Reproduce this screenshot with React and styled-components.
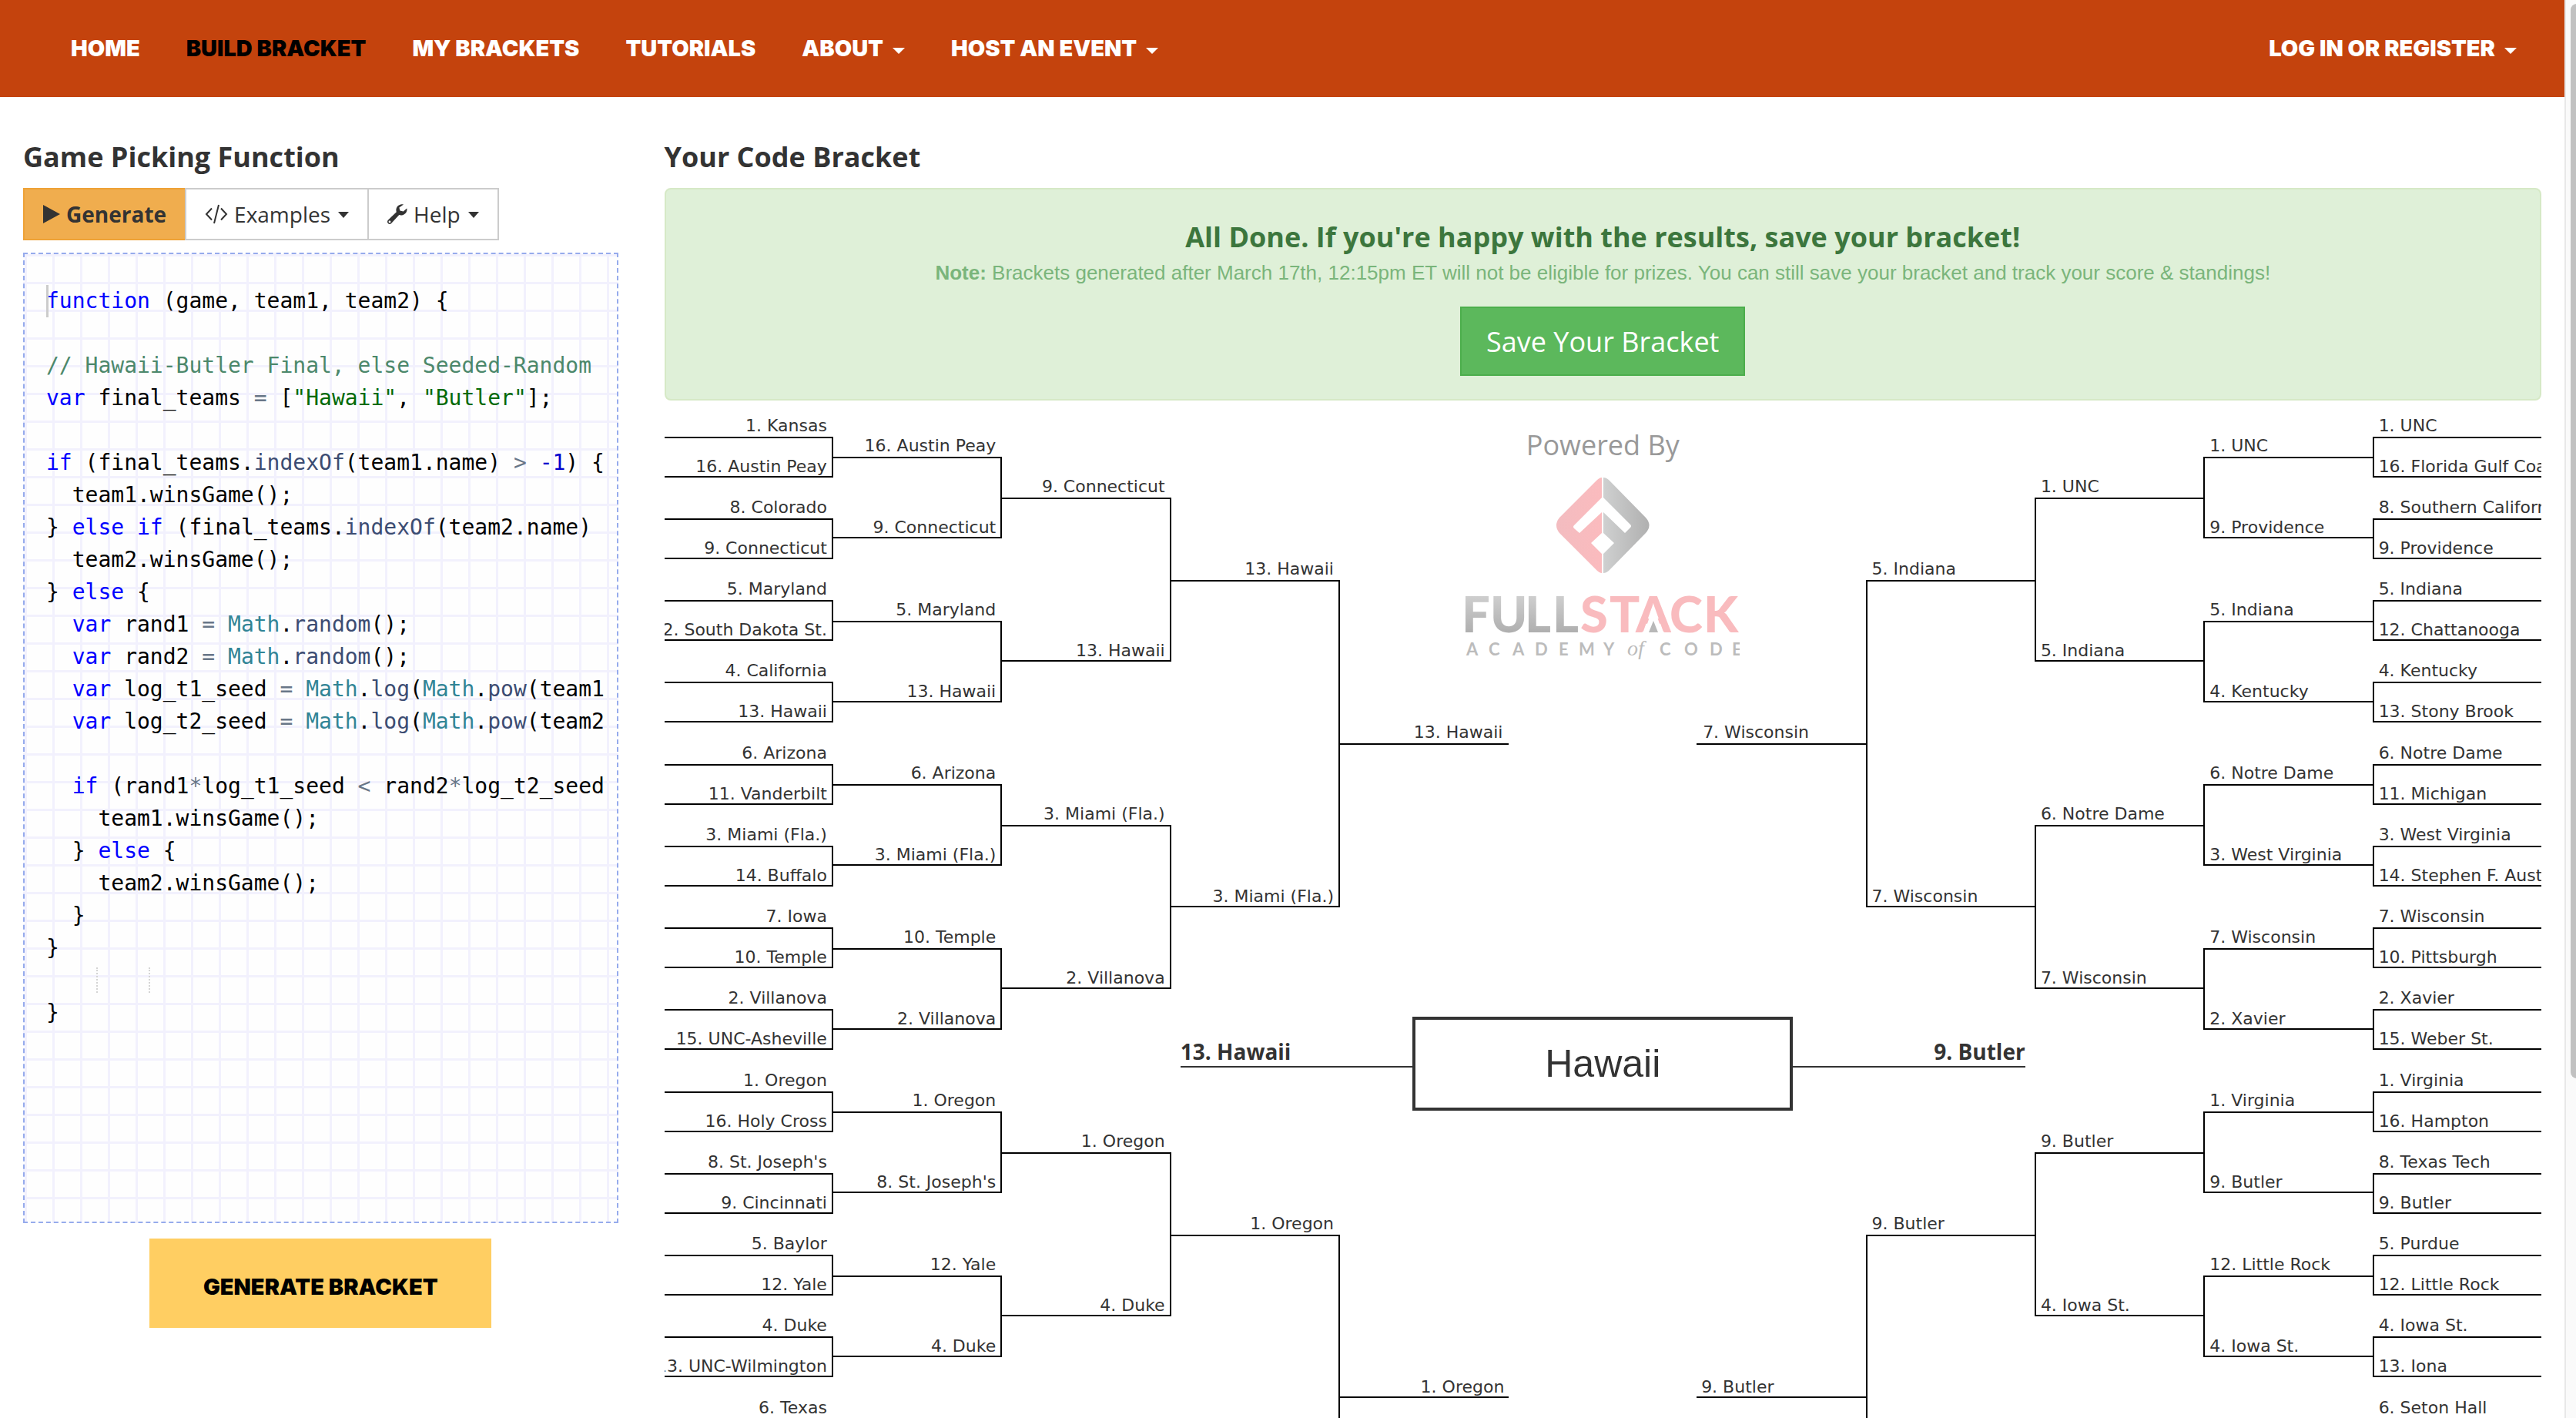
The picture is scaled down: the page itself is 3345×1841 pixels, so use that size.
import React from "react";
import styled, { createGlobalStyle } from "styled-components";

const leftRounds = [
  [
    ["1. Kansas", "16. Austin Peay"],
    ["8. Colorado", "9. Connecticut"],
    ["5. Maryland", "12. South Dakota St."],
    ["4. California", "13. Hawaii"],
    ["6. Arizona", "11. Vanderbilt"],
    ["3. Miami (Fla.)", "14. Buffalo"],
    ["7. Iowa", "10. Temple"],
    ["2. Villanova", "15. UNC-Asheville"],
    ["1. Oregon", "16. Holy Cross"],
    ["8. St. Joseph's", "9. Cincinnati"],
    ["5. Baylor", "12. Yale"],
    ["4. Duke", "13. UNC-Wilmington"],
    ["6. Texas", ""],
  ],
  [
    ["16. Austin Peay", "9. Connecticut"],
    ["5. Maryland", "13. Hawaii"],
    ["6. Arizona", "3. Miami (Fla.)"],
    ["10. Temple", "2. Villanova"],
    ["1. Oregon", "8. St. Joseph's"],
    ["12. Yale", "4. Duke"],
  ],
  [
    ["9. Connecticut", "13. Hawaii"],
    ["3. Miami (Fla.)", "2. Villanova"],
    ["1. Oregon", "4. Duke"],
  ],
  [
    ["13. Hawaii", "3. Miami (Fla.)"],
    ["1. Oregon", ""],
  ],
  [["13. Hawaii", "1. Oregon"]],
];

const rightRounds = [
  [
    ["1. UNC", "16. Florida Gulf Coast"],
    ["8. Southern California", "9. Providence"],
    ["5. Indiana", "12. Chattanooga"],
    ["4. Kentucky", "13. Stony Brook"],
    ["6. Notre Dame", "11. Michigan"],
    ["3. West Virginia", "14. Stephen F. Austin"],
    ["7. Wisconsin", "10. Pittsburgh"],
    ["2. Xavier", "15. Weber St."],
    ["1. Virginia", "16. Hampton"],
    ["8. Texas Tech", "9. Butler"],
    ["5. Purdue", "12. Little Rock"],
    ["4. Iowa St.", "13. Iona"],
    ["6. Seton Hall", ""],
  ],
  [
    ["1. UNC", "9. Providence"],
    ["5. Indiana", "4. Kentucky"],
    ["6. Notre Dame", "3. West Virginia"],
    ["7. Wisconsin", "2. Xavier"],
    ["1. Virginia", "9. Butler"],
    ["12. Little Rock", "4. Iowa St."],
  ],
  [
    ["1. UNC", "5. Indiana"],
    ["6. Notre Dame", "7. Wisconsin"],
    ["9. Butler", "4. Iowa St."],
  ],
  [
    ["5. Indiana", "7. Wisconsin"],
    ["9. Butler", ""],
  ],
  [["7. Wisconsin", "9. Butler"]],
];

const navLinks = [
  { text: "Home" },
  { text: "Build Bracket", active: true },
  { text: "My Brackets" },
  { text: "Tutorials" },
  { text: "About", menu: true },
  { text: "Host an Event", menu: true },
];

function Side({ rounds, right }) {
  return (
    <SideWrap $right={right}>
      {rounds.map((games, i) => (
        <Round key={i} $slots={16 / 2 ** i}>
          {games.map(([top, bottom], key) => (
            <Game key={key}>
              <Team $right={right}>{top}</Team>
              <Joint $right={right} $last={i === 4}>
                <Team $right={right} $inner>
                  {bottom}
                </Team>
              </Joint>
            </Game>
          ))}
        </Round>
      ))}
    </SideWrap>
  );
}

function PlayIcon() {
  return (
    <svg width="22" height="24" viewBox="0 0 22 24" aria-hidden="true">
      <path d="M0 0 22 12 0 24Z" fill="currentColor" />
    </svg>
  );
}

function CodeIcon() {
  return (
    <svg width="30" height="26" viewBox="0 0 30 26" aria-hidden="true">
      <path
        d="M9 5.500 2 13l7 7.500M21 5.500 28 13l-7 7.500M18 1l-6 24"
        fill="none"
        stroke="currentColor"
        strokeWidth="2"
      />
    </svg>
  );
}

function WrenchIcon() {
  return (
    <svg width="26" height="26" viewBox="0 0 26 26" aria-hidden="true">
      <path
        d="M21 0.600C17 -0.400 12.600 2 11.600 6c-.4 1.500-.2 3 .2 4.200L.9 20.800c-1.200 1.200-1.200 3 0 4.200s3 1.200 4.200 0l10.200-11c1.400.6 3 .6 4.600.2 4-1 6.300-5 5.400-8.800l-4.600 4.200-4.300-1-1-4.200ZM3 21.600a1.400 1.400 0 1 1 0 2.800 1.400 1.400 0 0 1 0-2.800Z"
        fill="currentColor"
        fillRule="evenodd"
      />
    </svg>
  );
}

function FullstackLogo() {
  return (
    <Logo viewBox="0 0 356 236" role="img" aria-label="Fullstack Academy of Code">
      <defs>
        <linearGradient id="pink" x1="0" x2="1">
          <stop offset="0" stopColor="#f3bcc0" />
          <stop offset="1" stopColor="#fbbbbe" />
        </linearGradient>
        <linearGradient id="silver" x1="0" x2="1">
          <stop offset="0" stopColor="#cfd0d0" />
          <stop offset="1" stopColor="#b0b0b0" />
        </linearGradient>
        <linearGradient id="steel" x1="0" y1="0" x2="0" y2="1">
          <stop offset="0.200" stopColor="#cfcfcf" />
          <stop offset="0.800" stopColor="#b0b0b0" />
        </linearGradient>
      </defs>
      <path
        d="M177 0v26l-36 36q-2 2 0 4l7 6 29-27v27l-14 13 14 14v25q-3 0-7-4l-48-48q-8-10 0-20l48-48q4-4 7-4Z"
        fill="url(#pink)"
      />
      <path
        d="M179 0v26l35 35q2 2 0 4l-7 7-28-27v27l14 13-14 14v25q4 0 8-4l47-48q9-10 0-20l-47-48q-4-4-8-4Z"
        fill="url(#silver)"
      />
      <LogoWord x="-5 32 77 113" y="201" fill="url(#steel)">
        FULL
      </LogoWord>
      <LogoWord x="149 187 221 265 309" y="201" fill="#f9bbbe">
        STACK
      </LogoWord>
      {/* opens the crossbar of the A */}
      <path d="M244 166l12 36h-24Z" fill="#fff" />
      <path d="M244 186l6 15h-12Z" fill="#b8b8b8" />
      <LogoSmall x="1 30 61 90 121 147 179" y="231">
        ACADEMY
      </LogoSmall>
      <LogoOf x="210" y="231">
        of
      </LogoOf>
      <LogoSmall x="252 284 317 346" y="231">
        CODE
      </LogoSmall>
    </Logo>
  );
}

function App() {
  return (
    <Window>
      <GlobalStyle />
      <Page>
        <Header>
          <Nav>
            {navLinks.map((link) => (
              <NavLink key={link.text} href="#" $active={link.active}>
                {link.text}
                {link.menu && <Caret />}
              </NavLink>
            ))}
          </Nav>
          <NavLink href="#">
            Log in or Register
            <Caret />
          </NavLink>
        </Header>

        <Columns>
          <Column>
            <Title>Game Picking Function</Title>
            <Toolbar>
              <ToolButton $primary>
                <PlayIcon />
                Generate
              </ToolButton>
              <ToolButton>
                <CodeIcon />
                Examples
                <SmallCaret />
              </ToolButton>
              <ToolButton>
                <WrenchIcon />
                Help
                <SmallCaret />
              </ToolButton>
            </Toolbar>
            <Editor>
              <Cursor />
              <Code>
                <Kw>function</Kw> (game, team1, team2) {"{\n"}
                {"\n"}
                <Note>{"// Hawaii-Butler Final, else Seeded-Random"}</Note>
                {"\n"}
                <Kw>var</Kw> final_teams <Op>=</Op> [<Str>"Hawaii"</Str>,{" "}
                <Str>"Butler"</Str>];{"\n"}
                {"\n"}
                <Kw>if</Kw> (final_teams.<Fn>indexOf</Fn>(team1.name){" "}
                <Op>&gt;</Op> <Num>-1</Num>) {"{\n"}
                {"  team1.winsGame();\n"}
                {"} "}
                <Kw>else</Kw> <Kw>if</Kw> (final_teams.<Fn>indexOf</Fn>
                {"(team2.name)\n"}
                {"  team2.winsGame();\n"}
                {"} "}
                <Kw>else</Kw> {"{\n"}
                {"  "}
                <Kw>var</Kw> rand1 <Op>=</Op> <Lib>Math</Lib>.<Fn>random</Fn>
                {"();\n"}
                {"  "}
                <Kw>var</Kw> rand2 <Op>=</Op> <Lib>Math</Lib>.<Fn>random</Fn>
                {"();\n"}
                {"  "}
                <Kw>var</Kw> log_t1_seed <Op>=</Op> <Lib>Math</Lib>.
                <Fn>log</Fn>(<Lib>Math</Lib>.<Fn>pow</Fn>
                {"(team1\n"}
                {"  "}
                <Kw>var</Kw> log_t2_seed <Op>=</Op> <Lib>Math</Lib>.
                <Fn>log</Fn>(<Lib>Math</Lib>.<Fn>pow</Fn>
                {"(team2\n"}
                {"\n"}
                {"  "}
                <Kw>if</Kw> (rand1<Op>*</Op>log_t1_seed <Op>&lt;</Op> rand2
                <Op>*</Op>
                {"log_t2_seed\n"}
                {"    team1.winsGame();\n"}
                {"  } "}
                <Kw>else</Kw> {"{\n"}
                {"    team2.winsGame();\n"}
                {"  }\n"}
                {"}\n"}
                <Guide>{"    "}</Guide>
                <Guide>{"    "}</Guide>
                {"\n}"}
              </Code>
            </Editor>
            <GenerateButton>Generate Bracket</GenerateButton>
          </Column>

          <Column>
            <Title>Your Code Bracket</Title>
            <Alert>
              <AlertTitle>
                All Done. If you're happy with the results, save your bracket!
              </AlertTitle>
              <AlertNote>
                <b>Note:</b> Brackets generated after March 17th, 12:15pm ET
                will not be eligible for prizes. You can still save your bracket
                and track your score &amp; standings!
              </AlertNote>
              <SaveButton>Save Your Bracket</SaveButton>
            </Alert>
            <Bracket>
              <Side rounds={leftRounds} />
              <Center>
                <Powered>Powered By</Powered>
                <FullstackLogo />
                <Finals>
                  <Finalist>13. Hawaii</Finalist>
                  <Champion>Hawaii</Champion>
                  <Finalist $right>9. Butler</Finalist>
                </Finals>
              </Center>
              <Side rounds={rightRounds} right />
            </Bracket>
          </Column>
        </Columns>
      </Page>
      <ScrollTrack>
        <ScrollThumb />
      </ScrollTrack>
    </Window>
  );
}

const GlobalStyle = createGlobalStyle`
  * {
    box-sizing: border-box;
  }
  body {
    margin: 0;
    color: #333;
    background: #fff;
    font-family: "Open Sans", sans-serif;
    font-size: 28px;
  }
  button {
    font: inherit;
    cursor: pointer;
  }
`;

const Window = styled.div`
  display: flex;
  height: 100vh;
  overflow: hidden;
`;

const Page = styled.div`
  flex: 1;
  min-width: 0;
`;

const ScrollTrack = styled.div`
  width: 15px;
  padding: 5px 0 0 6px;
  overflow: hidden;
  background: #fafafa;
  border-left: 2px solid #e8e8e8;
`;

const ScrollThumb = styled.div`
  width: 16px;
  height: 76%;
  border-radius: 8px;
  background: #c1c1c1;
`;

const Header = styled.header`
  display: flex;
  justify-content: space-between;
  align-items: center;
  height: 126px;
  padding: 0 62px 0 92px;
  background: #c4430d;
`;

const Nav = styled.nav`
  display: flex;
  gap: 60px;
`;

const NavLink = styled.a`
  display: flex;
  align-items: center;
  color: ${(props) => (props.$active ? "#000" : "#fff")};
  font-family: Inter, sans-serif;
  font-size: 29px;
  font-weight: 900;
  line-height: 40px;
  text-decoration: none;
  text-transform: uppercase;
  white-space: nowrap;
`;

const Caret = styled.span`
  margin-top: 6px;
  margin-left: 12px;
  border-top: 8px solid currentColor;
  border-right: 8px solid transparent;
  border-left: 8px solid transparent;
`;

const SmallCaret = styled(Caret)`
  margin-top: 2px;
  margin-left: 2px;
  border-right-width: 7px;
  border-left-width: 7px;
`;

const Columns = styled.main`
  display: grid;
  grid-template-columns: minmax(0, 1fr) minmax(0, 3fr);
`;

const Column = styled.section`
  display: flex;
  flex-direction: column;
  padding: 58px 30px 0;
`;

const Title = styled.h1`
  margin: 0 0 20px;
  font-size: 36px;
  font-weight: 700;
  line-height: 40px;
`;

const Toolbar = styled.div`
  display: flex;
  margin-bottom: 16px;
`;

const ToolButton = styled.button`
  display: flex;
  align-items: center;
  gap: 8px;
  height: 68px;
  padding: 0 24px;
  color: #333;
  font-weight: ${(props) => (props.$primary ? 700 : 400)};
  background: ${(props) => (props.$primary ? "#f0ad4e" : "#fff")};
  border: 2px solid ${(props) => (props.$primary ? "#eea236" : "#ccc")};

  & + & {
    margin-left: -2px;
  }
`;

const Editor = styled.div`
  position: relative;
  height: 1260px;
  padding: 40px 12px 0 28px;
  border: 2px dashed #96abec;
  background-color: #fefefe;
  background-image: linear-gradient(90deg, #f2f1fd 3px, transparent 3px),
    linear-gradient(#f2f1fd 3px, transparent 3px);
  background-size: 36px 36px;
`;

const Cursor = styled.i`
  position: absolute;
  width: 3px;
  height: 42px;
  background: #ccc;
`;

const Code = styled.pre`
  margin: 0;
  overflow: hidden;
  color: #000;
  font-family: "DejaVu Sans Mono", monospace;
  font-size: 28px;
  line-height: 42px;
`;

const Kw = styled.span`
  color: #0000ff;
`;

const Num = styled.span`
  color: #0000cd;
`;

const Str = styled.span`
  color: #036a07;
`;

const Op = styled.span`
  color: #687687;
`;

const Fn = styled.span`
  color: #3c4c72;
`;

const Lib = styled.span`
  color: #318495;
`;

const Note = styled.span`
  color: #4c886b;
`;

const Guide = styled.span`
  margin-left: -2px;
  border-right: 2px dotted #d4d4d4;
`;

const GenerateButton = styled.button`
  align-self: center;
  width: 444px;
  height: 116px;
  margin-top: 20px;
  padding: 8px 0 0;
  border: 0;
  color: #000;
  background: #ffce62;
  font-family: Inter, sans-serif;
  font-size: 29px;
  font-weight: 900;
  text-transform: uppercase;
`;

const Alert = styled.div`
  display: flex;
  flex-direction: column;
  align-items: center;
  padding: 42px 30px 30px;
  border: 2px solid #d6e9c6;
  border-radius: 8px;
  color: #3c763d;
  background: #dff0d8;
`;

const AlertTitle = styled.h2`
  margin: 0;
  font-size: 36px;
  line-height: 40px;
`;

const AlertNote = styled.p`
  margin: 8px 0 26px;
  color: #7ab57b;
  font-family: "Liberation Sans", sans-serif;
  font-size: 26px;
  line-height: 36px;
`;

const SaveButton = styled.button`
  height: 90px;
  padding: 0 32px;
  border: 2px solid #4cae4c;
  color: #fff;
  background: #5cb85c;
  font-size: 36px;
`;

/* both sides and the center share one grid cell, the center lies over them */
const Bracket = styled.div`
  display: grid;
  height: 1700px;
  margin-top: 20px;
`;

const SideWrap = styled.div`
  grid-area: 1 / 1;
  justify-self: ${(props) => (props.$right ? "end" : "start")};
  display: flex;
  flex-direction: ${(props) => (props.$right ? "row-reverse" : "row")};
  width: 45%;
  height: 100%;
  font-family: "DejaVu Sans", sans-serif;
  font-size: 22px;
  line-height: 22px;
`;

const Round = styled.div`
  flex: 1;
  min-width: 0;
  display: grid;
  grid-template-columns: minmax(0, 1fr);
  grid-template-rows: repeat(${(props) => props.$slots}, minmax(0, 1fr));
`;

const Game = styled.div`
  display: grid;
  grid-template-columns: minmax(0, 1fr);
  grid-template-rows: minmax(0, 1fr) minmax(0, 2fr) minmax(0, 1fr);
  overflow: hidden;
`;

const Team = styled.div`
  display: flex;
  align-items: flex-end;
  justify-content: ${(props) => (props.$right ? "flex-start" : "flex-end")};
  height: 100%;
  padding: ${(props) => (props.$inner ? "0 6px 1px" : "0 8px 3px")};
  white-space: nowrap;
`;

const Joint = styled.div`
  border: 0 solid #000;
  border-top-width: 2px;
  border-bottom-width: 2px;
  border-right-width: ${(props) => (props.$right || props.$last ? 0 : "2px")};
  border-left-width: ${(props) => (props.$right && !props.$last ? "2px" : 0)};
`;

const Center = styled.div`
  grid-area: 1 / 1;
  justify-self: center;
  display: flex;
  flex-direction: column;
  align-items: center;
  width: 45%;
  padding-top: 18px;
`;

const Powered = styled.div`
  color: #999;
  font-size: 36px;
  line-height: 40px;
`;

const Logo = styled.svg`
  width: 356px;
  height: 236px;
  margin-top: 22px;
`;

const LogoWord = styled.text`
  font-family: Lato, sans-serif;
  font-size: 65px;
  font-weight: 900;
`;

const LogoSmall = styled.text`
  fill: #bcbcbc;
  font-family: Lato, sans-serif;
  font-size: 22px;
  font-weight: 700;
`;

const LogoOf = styled.text`
  fill: #bcbcbc;
  font-family: "Liberation Serif", serif;
  font-size: 28px;
  font-style: italic;
`;

const Finals = styled.div`
  display: flex;
  align-items: flex-start;
  width: 100%;
  margin-top: 464px;
`;

const Finalist = styled.div`
  flex: 1;
  display: flex;
  align-items: flex-end;
  justify-content: ${(props) => (props.$right ? "flex-end" : "flex-start")};
  height: 66px;
  border-bottom: 2px solid #333;
  font-weight: 700;
  line-height: 38px;
`;

const Champion = styled.div`
  display: flex;
  align-items: center;
  justify-content: center;
  width: 45%;
  height: 122px;
  border: 4px solid #333;
  font-family: "Liberation Sans", sans-serif;
  font-size: 50px;
`;

export default App;
